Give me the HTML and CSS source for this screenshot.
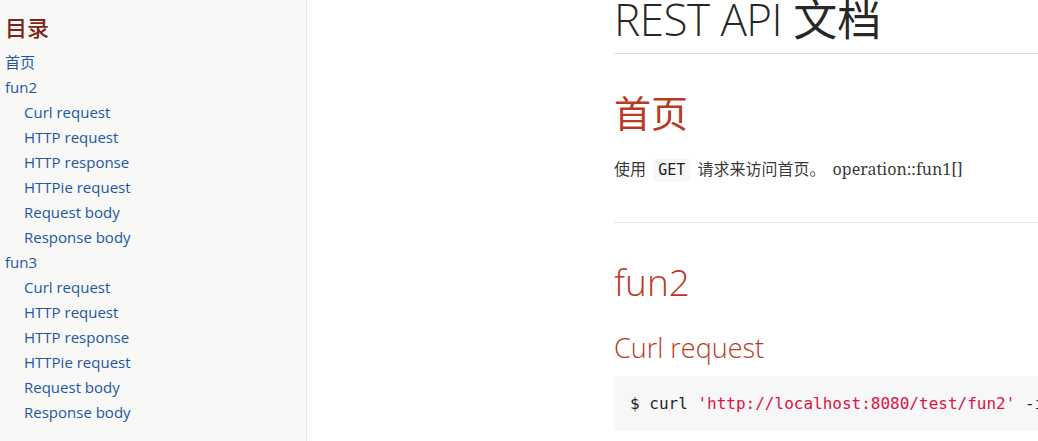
FILE: index.html
```html
<!DOCTYPE html>
<html lang="zh">
<head>
<meta charset="utf-8">
<title>REST API 文档</title>
<link rel="stylesheet" href="styles.css">
</head>
<body>
<nav class="toc">
  <div class="toc-title">目录</div>
  <ul class="toc-list">
    <li><a href="#">首页</a></li>
    <li><a href="#">fun2</a>
      <ul class="toc-sub">
        <li><a href="#">Curl request</a></li>
        <li><a href="#">HTTP request</a></li>
        <li><a href="#">HTTP response</a></li>
        <li><a href="#">HTTPie request</a></li>
        <li><a href="#">Request body</a></li>
        <li><a href="#">Response body</a></li>
      </ul>
    </li>
    <li><a href="#">fun3</a>
      <ul class="toc-sub">
        <li><a href="#">Curl request</a></li>
        <li><a href="#">HTTP request</a></li>
        <li><a href="#">HTTP response</a></li>
        <li><a href="#">HTTPie request</a></li>
        <li><a href="#">Request body</a></li>
        <li><a href="#">Response body</a></li>
      </ul>
    </li>
  </ul>
</nav>
<main class="content">
  <header class="doc-header">
    <h1 class="doc-title">REST API <span class="cjk">文档</span></h1>
  </header>
  <section class="sect">
    <h2 class="sect-title"><span class="cjk">首页</span></h2>
    <p class="para">使用 <code class="inline-code">GET</code> 请求来访问首页。 operation::fun1[]</p>
  </section>
  <section class="sect sect-next">
    <h2 class="sect-title">fun2</h2>
    <h3 class="sub-title">Curl request</h3>
    <pre class="listing"><code>$ curl <span class="str">'http://localhost:8080/test/fun2'</span> -i</code></pre>
  </section>
</main>
</body>
</html>
```
FILE: styles.css
```css
html, body {
  margin: 0;
  padding: 0;
}
body {
  height: 441px;
  overflow: hidden;
  display: flex;
  align-items: stretch;
  background: #fff;
  color: rgba(0, 0, 0, 0.8);
  font-family: "Noto Serif", "DejaVu Serif", "Noto Sans CJK SC", serif;
}

/* ---------- TOC sidebar ---------- */
.toc {
  box-sizing: border-box;
  width: 307px;
  flex-shrink: 0;
  background: #f8f8f7;
  border-right: 1px solid #e7e7e9;
  padding: 12px 0 0 5px;
  font-family: "Open Sans", "Noto Sans CJK SC", sans-serif;
}
.toc-title {
  color: #7a2518;
  font-size: 22px;
  line-height: 30px;
  font-weight: 500;
  margin-bottom: 8px;
}
.toc-list,
.toc-sub {
  list-style: none;
  margin: 0;
  padding: 0;
}
.toc-sub {
  padding-left: 19px;
}
.toc-list li {
  font-size: 15px;
  line-height: 25px;
}
.toc-list a {
  color: #2156a5;
  text-decoration: none;
}

/* ---------- main content ---------- */
.content {
  flex-shrink: 0;
  width: 1000px;
  margin-left: 307px;
}
.doc-header {
  padding-bottom: 15px;
  border-bottom: 1px solid #dddddf;
}
.doc-title {
  margin: 0;
  font-family: "Open Sans", "Noto Sans CJK SC", sans-serif;
  font-weight: 300;
  font-size: 44px;
  line-height: 38px;
  color: rgba(0, 0, 0, 0.85);
  letter-spacing: -0.5px;
}
.cjk {
  font-weight: 400;
  letter-spacing: 0;
}
.sect {
  padding-bottom: 40px;
}
.sect-next {
  border-top: 1px solid #e7e7e9;
}
.sect-title {
  margin: 38px 0 0;
  font-family: "Open Sans", "Noto Sans CJK SC", sans-serif;
  font-weight: 300;
  font-size: 37px;
  line-height: 44px;
  color: #ba3925;
}
.sect-next .sect-title {
  margin-top: 37px;
}
.para {
  margin: 21px 0 0;
  font-size: 16px;
  line-height: 24px;
  word-spacing: 3px;
  color: rgba(0, 0, 0, 0.8);
}
.inline-code {
  font-family: "DejaVu Sans Mono", monospace;
  font-size: 15px;
  word-spacing: 0;
  color: rgba(0, 0, 0, 0.9);
  background: #f7f7f8;
  border-radius: 4px;
  padding: 3px 5px;
}
.sub-title {
  margin: 28px 0 0;
  font-family: "Open Sans", sans-serif;
  font-weight: 300;
  font-size: 27px;
  line-height: 32px;
  color: #ba3925;
}
.listing {
  margin: 12px 0 0;
  padding: 16px;
  background: #f7f7f8;
  border-radius: 4px;
  font-family: "DejaVu Sans Mono", monospace;
  font-size: 16px;
  line-height: 23px;
  color: rgba(0, 0, 0, 0.9);
}
.listing .str {
  color: #dd1144;
}
```
